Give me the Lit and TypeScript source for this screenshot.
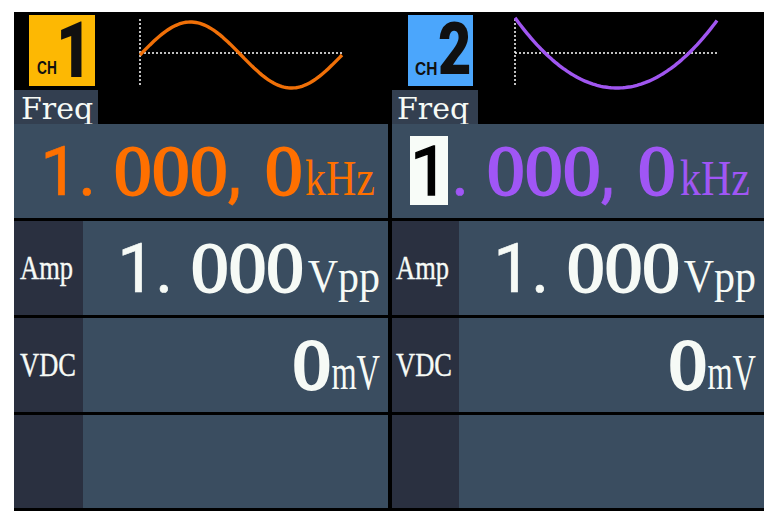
import { LitElement, html, css, svg } from "lit";
import { customElement } from "lit/decorators.js";

const path = (f: (x: number) => number) => {
  let d = "";
  for (let x = 1; x <= 203; x += 2) d += `${x === 1 ? "M" : "L"}${x} ${f(x).toFixed(1)}`;
  return d;
};

@customElement("app-root")
export class AppRoot extends LitElement {
  static styles = css`
    :host { display: block; width: 773px; height: 525px; background: #fff; padding: 12px 0 0 14px; box-sizing: border-box; overflow: hidden; }
    .screen { width: 750px; height: 499px; background: #000; display: grid; grid-template-columns: 374px 372px; column-gap: 4px; }
    .ch { display: flex; flex-direction: column; min-width: 0; }
    .head { height: 112px; display: flex; flex-direction: column; }
    .top { height: 78px; display: flex; align-items: flex-start; }
    .badge { width: 66px; height: 71px; margin-top: 3px; flex: none; position: relative; color: #101010; font-family: "Liberation Sans", sans-serif; font-weight: 700; }
    .c1 .badge { margin-left: 15px; background: #fdb803; }
    .c2 .badge { margin-left: 16px; width: 65px; background: #4ba6fc; }
    .cht { position: absolute; line-height: 1; transform-origin: left top; }
    .c1 .cht { left: 8px; top: 43px; font-size: 19px; transform: scaleX(.72); }
    .c2 .cht { left: 7px; top: 45px; font-size: 18px; transform: scaleX(.86); }
    .num { position: absolute; line-height: 1; display: block; transform-origin: left top; font-family: Roboto, sans-serif; font-weight: 900; }
    .c1 .num { left: 27px; top: -3px; font-size: 78px; transform: scaleX(.8); }
    .c2 .num { left: 30px; top: -1px; font-size: 72px; transform: scaleX(.8); }
    .wave { display: block; flex: none; }
    .c1 .wave { margin-left: 44px; }
    .c2 .wave { margin-left: 41px; }
    .tab { height: 34px; background: #333f50; color: #f6faf6; font-family: "DejaVu Serif", serif; font-size: 30px; line-height: 38px; padding-left: 7px; box-sizing: border-box; }
    .c1 .tab { width: 84px; }
    .c2 .tab { width: 86px; padding-left: 5px; }
    .row { height: 94px; margin-bottom: 3px; background: #3a4d60; display: flex; align-items: stretch; }
    .row:last-child { height: 93px; margin-bottom: 0; }
    .lab { background: #2a3040; flex: none; color: #f6faf6; font-family: "Liberation Serif", serif; display: flex; align-items: center; padding-left: 6px; box-sizing: border-box; }
    .c1 .lab { width: 69px; }
    .c2 .lab { width: 67px; padding-left: 4px; }
    .lab span { display: inline-block; font-size: 26.5px; line-height: 1; transform: scaleY(1.24); -webkit-text-stroke: .3px currentColor; }
    .val { flex: 1; min-width: 0; display: flex; justify-content: flex-end; align-items: baseline; color: #f6faf6; font-family: Roboto, sans-serif; font-size: 68px; line-height: 94px; white-space: pre; word-spacing: 1px; padding-right: 8px; box-sizing: border-box; -webkit-text-stroke: .7px currentColor; }
    .run { display: block; }
    .d { display: inline-block; font-family: "Liberation Serif", serif; font-size: 71px; transform: scaleX(1.06); transform-origin: left center; margin-right: 6px; -webkit-text-stroke: 2px currentColor; }
    .d.one { margin-right: 2px; }
    .freq { padding-right: 13px; }
    .freq .d { letter-spacing: .4px; }
    .last { margin-left: 6px; }
    .c1 .freq { color: #ff7000; }
    .c2 .freq { color: #a056f5; padding-right: 14px; }
    .hl { background: #f8fcf8; color: #000; display: inline-block; height: 69px; line-height: 73px; width: 38px; margin-right: 3px; -webkit-text-stroke: 1.4px #000; text-align: center; }
    .unit { font-family: "Liberation Serif", serif; -webkit-text-stroke: 0; display: inline-block; transform-origin: right 83.75%; line-height: 1; font-weight: 400; word-spacing: 0; }
    .khz { font-size: 42px; transform: scaleY(1.2); margin-left: 2px; }
    .c2 .khz { margin-left: 4px; }
    .vpp { font-size: 42px; transform: scaleY(1.12); margin-left: 4px; }
    .mv { font-size: 36px; transform: scale(.9, 1.38); margin-left: -4px; }
    .zero { -webkit-text-stroke: 3px currentColor; }
  `;

  private wave(d: string, color: string) {
    return html`<svg class="wave" width="205" height="78" viewBox="0 0 205 78">
      ${svg`<path d="M1 7V75" stroke="#fff" stroke-width="1.5" stroke-dasharray="2 2" fill="none"/>
      <path d="M1 41H203" stroke="#fff" stroke-width="1.5" stroke-dasharray="2 2" fill="none"/>
      <path d="${d}" stroke="${color}" stroke-width="3.4" fill="none"/>`}
    </svg>`;
  }

  private channel(n: number, d: string, color: string, hl: boolean) {
    return html`<section class="ch c${n}">
      <div class="head">
        <div class="top">
          <div class="badge"><span class="cht">CH</span><span class="num">${n}</span></div>
          ${this.wave(d, color)}
        </div>
        <div class="tab">Freq</div>
      </div>
      <div class="row"><div class="val freq"><span class="run">${hl ? html`<span class="hl">1</span>` : "1"}. <span class="d">000</span>, <span class="d one last">0</span></span><span class="unit khz">kHz</span></div></div>
      <div class="row"><div class="lab"><span>Amp</span></div><div class="val"><span class="run">1. <span class="d">000</span></span><span class="unit vpp">Vpp</span></div></div>
      <div class="row"><div class="lab"><span>VDC</span></div><div class="val"><span class="run"><span class="d one zero">0</span></span><span class="unit mv">mV</span></div></div>
      <div class="row"><div class="lab"></div></div>
    </section>`;
  }

  render() {
    const sine = path((x) => 43 - 33 * Math.sin((2 * Math.PI * (x - 1)) / 202));
    const para = path((x) => 76 - 0.00675 * (x - 103) * (x - 103));
    return html`<div class="screen">
      ${this.channel(1, sine, "#f07008", false)}
      ${this.channel(2, para, "#a056f0", true)}
    </div>`;
  }
}
